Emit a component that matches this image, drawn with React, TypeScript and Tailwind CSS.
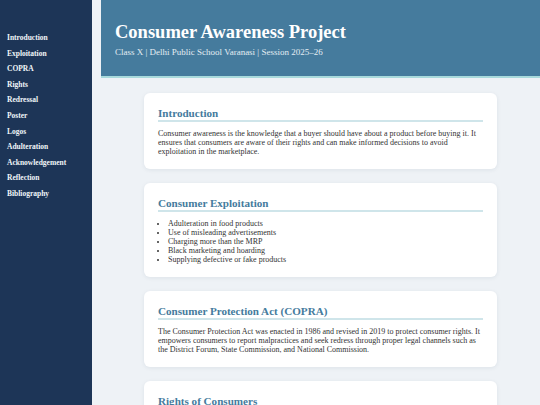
import React from "react";

const nav = [
  "Introduction",
  "Exploitation",
  "COPRA",
  "Rights",
  "Redressal",
  "Poster",
  "Logos",
  "Adulteration",
  "Acknowledgement",
  "Reflection",
  "Bibliography",
];

function Card({ title, children }: { title: string; children: React.ReactNode }) {
  return (
    <section className="w-[353px] rounded-[6px] bg-white px-[14px] pt-[14px] pb-[13px] shadow-[0_1px_4px_rgba(30,50,80,0.08)]">
      <h2 className="border-b-2 border-[#cfe5ea] text-[11.1px] leading-[13px] font-bold text-[#457b9d]">
        {title}
      </h2>
      <div className="mt-[7px] text-[8px] leading-[9px] text-[#333333]">{children}</div>
    </section>
  );
}

export default function App() {
  return (
    <div
      className="flex min-h-screen bg-[#eef2f6]"
      style={{ fontFamily: '"Liberation Serif", "DejaVu Serif", serif' }}
    >
      <aside className="w-[92px] shrink-0 bg-[#1d3557] pt-[30px]">
        <nav className="flex flex-col">
          {nav.map((n) => (
            <a
              key={n}
              className="block pl-[7px] text-[7.5px] leading-[15.6px] font-bold text-[#f1f5f9]"
            >
              {n}
            </a>
          ))}
        </nav>
      </aside>
      <main className="flex-1 pl-[9px]">
        <header className="h-[78px] border-b-2 border-[#a8dadc] bg-[#457b9d] pl-[14px] pt-[21px]">
          <h1 className="text-[18.5px] leading-[22px] font-bold text-white">
            Consumer Awareness Project
          </h1>
          <p className="mt-[3px] text-[9px] leading-[12px] text-[#e3edf3]">
            Class X | Delhi Public School Varanasi | Session 2025–26
          </p>
        </header>
        <div className="flex flex-col items-center gap-[14px] pt-[15px] pb-[20px]">
          <Card title="Introduction">
            <p>
              Consumer awareness is the knowledge that a buyer should have about a product before
              buying it. It ensures that consumers are aware of their rights and can make informed
              decisions to avoid exploitation in the marketplace.
            </p>
          </Card>
          <Card title="Consumer Exploitation">
            <ul className="list-disc pl-[10px]">
              <li>Adulteration in food products</li>
              <li>Use of misleading advertisements</li>
              <li>Charging more than the MRP</li>
              <li>Black marketing and hoarding</li>
              <li>Supplying defective or fake products</li>
            </ul>
          </Card>
          <Card title="Consumer Protection Act (COPRA)">
            <p>
              The Consumer Protection Act was enacted in 1986 and revised in 2019 to protect
              consumer rights. It empowers consumers to report malpractices and seek redress
              through proper legal channels such as the District Forum, State Commission, and
              National Commission.
            </p>
          </Card>
          <Card title="Rights of Consumers">
            <ul className="list-disc pl-[10px]">
              <li>Right to Safety</li>
              <li>Right to be Informed</li>
              <li>Right to Choose</li>
              <li>Right to be Heard</li>
              <li>Right to Seek Redressal</li>
              <li>Right to Consumer Education</li>
            </ul>
          </Card>
        </div>
      </main>
    </div>
  );
}
